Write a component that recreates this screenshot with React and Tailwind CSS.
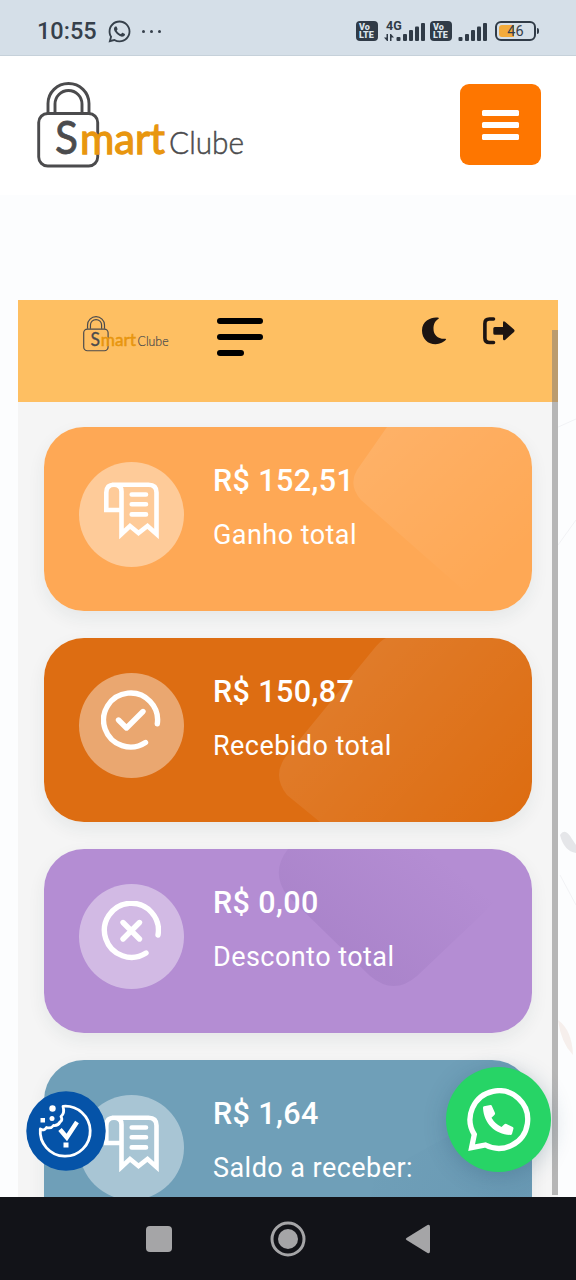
import React from "react";
import { FaWhatsapp } from "react-icons/fa";

const ReceiptIcon = () => (
  <svg className="w-[60px] h-[60px]" viewBox="0 0 60 60" fill="none" stroke="#fff" strokeWidth="4.6" aria-hidden="true">
    <path d="M11 5.700H47.500Q55.500 5.700 55.500 13.500V55L46.500 47L37.500 54L29 47L20.500 55V12.500Q20.500 5.700 13 5.700Q5.300 5.700 5.300 13.500V31H20.500" />
    <path strokeLinecap="round" d="M30.700 15.500H45M30.700 25.200H45M30.700 35.400H45" />
  </svg>
);

const CheckIcon = () => (
  <svg className="w-[60px] h-[60px]" viewBox="0 0 60 60" fill="none" stroke="#fff" strokeWidth="5.400" strokeLinecap="round" aria-hidden="true">
    <path d="M56.300 33.800A27 27 0 1 0 44.500 52.500" />
    <path strokeLinejoin="round" d="M17.500 30L25.500 38L42 21.500" />
  </svg>
);

const CrossIcon = () => (
  <svg className="w-[60px] h-[60px]" viewBox="0 0 60 60" fill="none" stroke="#fff" strokeWidth="5.400" strokeLinecap="round" aria-hidden="true">
    <path d="M57 34A27 27 0 1 0 45 52" />
    <path d="M22 21.500L38.500 38M38.500 21.500L22 38" />
  </svg>
);

const MoonIcon = ({ className }) => (
  <svg className={className} viewBox="0 0 25 28" fill="currentColor" aria-hidden="true">
    <path d="M16.500 0.800C11 -0.500 0 3 0 13.500C0 22 6 27.300 13.500 27.300C18 27.300 22 25 24 22.600Q24.500 21.700 23.300 21.800C16 22.300 11.500 18 11.500 12C11.500 7 12.800 4 16.500 1.700Q17.300 1 16.500 0.800Z" />
  </svg>
);

const LogoutIcon = ({ className }) => (
  <svg className={className} viewBox="0 0 32 28" fill="none" aria-hidden="true">
    <path d="M10.500 2H6.500Q1.900 2 1.900 6.500V21Q1.900 25.500 6.500 25.500H10.500" stroke="currentColor" strokeWidth="3.600" strokeLinecap="round" />
    <path d="M10.300 11.500Q10.300 10 11.800 10H20V5.500Q20.300 3.500 22 4.700L31 12.500Q32.200 13.800 31 15L22 23Q20.300 24 20 22V17.800H11.800Q10.300 17.800 10.300 16.300Z" fill="currentColor" />
  </svg>
);

const cards = [
  {
    value: "R$ 152,51",
    label: "Ganho total",
    color: "bg-[#fea855]",
    icon: <ReceiptIcon />,
    shape: "M343 0L313 43Q304 58 317 73L425 168Q440 184 460 184H488V0Z",
    tone: "#fff",
    line: [310, 20, 440, 160],
  },
  {
    value: "R$ 150,87",
    label: "Recebido total",
    color: "bg-[#dd6d12]",
    icon: <CheckIcon />,
    shape: "M342 0Q337 2 329 12L243 117Q227 137 243 157L276 184H488V0Z",
    tone: "#fff",
    line: [280, 30, 460, 190],
  },
  {
    value: "R$ 0,00",
    label: "Desconto total",
    color: "bg-[#b48dd3]",
    icon: <CrossIcon />,
    shape: "M244 0Q226 23 243 46L326 127Q350 147 373 127L488 18V0Z",
    tone: "#60408a",
    line: [320, 110, 400, 10],
  },
  {
    value: "R$ 1,64",
    label: "Saldo a receber:",
    color: "bg-[#6f9fb8]",
    icon: <ReceiptIcon />,
    shape: "M320 184L330 117L408 74Q450 50 488 85V184Z",
    tone: "#3c6a90",
    line: [470, 150, 340, 80],
  },
];

const Logo = ({ className }) => (
  <svg className={`overflow-visible ${className}`} viewBox="0 0 208 87">
    <g fill="none" stroke="#4b4b4d" strokeWidth="2.900">
      <path d="M11 31V21.500A20.500 20 0 0 1 52 21.500V31" />
      <path d="M18 31V22A13.500 13.500 0 0 1 45 22V31" />
      <rect x="1.700" y="31.500" width="59" height="52.500" rx="9" />
    </g>
    <text x="18" y="72" fill="#4b4b4d" stroke="#4b4b4d" strokeWidth="0.800" fontFamily="Lato, sans-serif" fontSize="47" textLength="23" lengthAdjust="spacingAndGlyphs">S</text>
    <text x="43" y="72" fill="#e8960f" stroke="#e8960f" strokeWidth="1.300" fontFamily="Lato, sans-serif" fontSize="43" textLength="85" lengthAdjust="spacingAndGlyphs">mart</text>
    <text x="132" y="71.500" fill="#4b4b4d" stroke="#4b4b4d" strokeWidth="0.500" fontFamily="Lato, sans-serif" fontSize="32" fontWeight="300" textLength="75" lengthAdjust="spacingAndGlyphs">Clube</text>
  </svg>
);

const Volte = () => (
  <div className="w-[22px] h-[20px] rounded-[4px] bg-[#303b47] text-[#dce5ec] text-[9px] leading-[8px] font-black pt-[2px] pl-[3px]">
    <div>Vo</div>
    <div>LTE</div>
  </div>
);

const Signal = ({ data }) => (
  <svg className={data ? "w-[41px] h-[22px] overflow-visible" : "w-[30px] h-[22px]"} viewBox={data ? "0 0 41 22" : "11 0 30 22"} fill="#303b47" aria-hidden="true">
    {data && (
      <>
        <text x="2" y="9.500" fontFamily="Roboto, sans-serif" fontSize="12.500" fontWeight="700">4G</text>
        <path d="M4 14V21H3L0 17.500H2.500V14ZM6 21V14H7L10 17.500H7.500V21Z" />
      </>
    )}
    <rect x="12.500" y="17" width="4" height="4" rx="1" />
    <rect x="19" y="14" width="4" height="7" rx="1" />
    <rect x="25" y="10" width="4" height="11" rx="1" />
    <rect x="31" y="6.500" width="4" height="14.500" rx="1" />
    <rect x="37" y="3" width="4" height="18" rx="1" />
  </svg>
);

const StatusBar = () => (
  <div className="h-[56px] shrink-0 bg-[#d5dfe8] border-b border-[#c6d1da] flex items-center justify-between pl-[37px] pr-[37px] pt-[7px] text-[#36404b]">
    <div className="flex items-center">
      <span className="w-[72px] mt-[2px] text-[23.500px] font-medium">10:55</span>
      <FaWhatsapp className="w-[25px] h-[25px] -ml-[2px]" />
      <span className="flex gap-[5px] ml-[10px]">
        <i className="size-[3px] rounded-full bg-current" />
        <i className="size-[3px] rounded-full bg-current" />
        <i className="size-[3px] rounded-full bg-current" />
      </span>
    </div>
    <div className="flex items-center">
      <Volte />
      <div className="ml-[6px] mr-[5px]"><Signal data /></div>
      <Volte />
      <div className="ml-[5px] mr-[8px]"><Signal /></div>
      <div className="relative w-[41px] h-[20px] rounded-[6px] border-2 border-[#303b47] p-[2px]">
        <div className="w-[15px] h-full rounded-l-[3px] bg-[#f3ab3b]" />
        <span className="absolute inset-0 text-center text-[14.500px] leading-[17px]">46</span>
      </div>
      <div className="w-[2px] h-[6px] ml-[1px] bg-[#303b47] rounded-r" />
    </div>
  </div>
);

const Card = ({ card, index }) => (
  <div className={`relative h-[184px] shrink-0 rounded-[40px] overflow-hidden ${card.color}`}>
    <svg className="absolute inset-0 w-full h-full" viewBox="0 0 488 184" aria-hidden="true">
      <defs>
        <linearGradient id={`shine${index}`} gradientUnits="userSpaceOnUse" x1={card.line[0]} y1={card.line[1]} x2={card.line[2]} y2={card.line[3]}>
          <stop offset="0" stopColor={card.tone} stopOpacity="0.110" />
          <stop offset="1" stopColor={card.tone} stopOpacity="0" />
        </linearGradient>
      </defs>
      <path d={card.shape} fill={`url(#shine${index})`} />
    </svg>
    <div className="relative flex pl-[35px] pt-[35px] text-white">
      <div className="w-[105px] h-[105px] rounded-full bg-white/40 pl-[22px] pt-[17px]">{card.icon}</div>
      <div className="ml-[29px]">
        <div className="text-[30.500px] leading-[38px] font-medium tracking-[0.4px]">{card.value}</div>
        <div className="mt-[18px] text-[27px] leading-[34px] tracking-[0.45px]">{card.label}</div>
      </div>
    </div>
  </div>
);

const CookieButton = () => (
  <button className="absolute left-[8px] top-[791px] w-[80px] h-[80px]" aria-label="Cookies">
    <svg viewBox="0 0 80 80" fill="none">
      <circle cx="40" cy="40" r="39.700" fill="#0553a8" />
      <path d="M37 15.300A25 25 0 1 1 14.300 38Q18 40.500 20.500 36.500Q25 38 27.500 34.500Q32 35 34 31Q37 29 35 25.500Q39 22 37 15.300Z" stroke="#fff" strokeWidth="2.800" strokeLinejoin="round" />
      <circle cx="26.500" cy="17.500" r="3.200" fill="#fff" />
      <rect x="14.500" y="27" width="4.500" height="4.500" fill="#fff" />
      <circle cx="26" cy="27.500" r="2.500" fill="#fff" />
      <path d="M34 38.500L40.800 46.500L51 31" stroke="#fff" strokeWidth="4.500" />
      <rect x="37.500" y="51.500" width="5" height="5" fill="#fff" />
    </svg>
  </button>
);

const WhatsAppButton = () => (
  <button className="absolute left-[428px] top-[767px] w-[105px] h-[105px] rounded-full bg-[#27d466] flex items-center justify-center shadow-[0_4px_22px_rgba(30,70,100,0.25)]" aria-label="WhatsApp">
    <svg className="w-[64px] h-[64px]" viewBox="0 0 64 64" fill="none">
      <path d="M4.600 59.600L7.300 46.500A28.800 28.800 0 1 1 18.500 57Z" stroke="#fff" strokeWidth="5.300" />
      <path d="M17 18.200L23.500 17.100Q24.600 17 25 18.200L28 25Q28.300 26.100 27.400 27L24.500 29.800Q28 36 34.500 39L37.400 36.200Q38.300 35.500 39.500 36L45.700 39Q46.700 39.600 46.400 40.700L45 46Q44.500 47.100 43.200 47C28 46 17 36 16 20Q15.900 18.500 17 18.200Z" fill="#fff" />
    </svg>
  </button>
);

export default function App() {
  return (
    <div className="w-[576px] h-[1280px] overflow-hidden flex flex-col bg-[#fcfdfe] font-[Roboto,sans-serif]">
      <StatusBar />

      <header className="h-[139px] shrink-0 bg-white flex justify-between pl-[37px] pr-[35px]">
        <Logo className="w-[208px] h-[87px] mt-[26px]" />
        <button className="w-[81px] h-[81px] mt-[28px] rounded-[9px] bg-[#fe7600] flex flex-col items-center justify-center gap-[6px]" aria-label="Menu">
          <span className="w-[37px] h-[6px] rounded-[1.500px] bg-white" />
          <span className="w-[37px] h-[6px] rounded-[1.500px] bg-white" />
          <span className="w-[37px] h-[6px] rounded-[1.500px] bg-white" />
        </button>
      </header>

      <div className="relative flex-1 min-h-0 pt-[105px] px-[18px]">
        {/* faint line art at the right edge of the page */}
        <svg className="absolute right-0 top-0 w-[20px] h-[1002px]" viewBox="0 0 20 1002" fill="none" aria-hidden="true">
          <path d="M0 233L20 224M2 350L20 325M4 680L20 710" stroke="#f1f2f5" />
          <path d="M4 640Q9 632 16 644L20 650V658Q8 656 4 640Z" fill="#e5e6e9" />
          <path d="M2 825Q16 835 17 860Q5 848 2 825Z" fill="#f6efec" />
        </svg>

        <div className="relative w-[540px] h-full">
          <div className="h-full overflow-hidden bg-[#f5f5f5] flex flex-col">
            <div className="h-[102px] shrink-0 bg-[#febf62] flex items-start pl-[65px] text-[#1c1412]">
              <Logo className="w-[86px] h-[36px] mt-[16px]" />
              <div className="ml-[48px] mt-[18px] w-[46px] flex flex-col gap-[10px]">
                <span className="h-[6px] rounded-full bg-black" />
                <span className="h-[6px] rounded-full bg-black" />
                <span className="h-[6px] w-[27px] rounded-full bg-black" />
              </div>
              <MoonIcon className="ml-[159px] mt-[17px] w-[25px] h-[28px]" />
              <LogoutIcon className="ml-[36px] mt-[17px] w-[32px] h-[28px]" />
            </div>
            <div className="flex flex-col gap-[27px] pt-[25px] px-[26px]">
              {cards.map((card, i) => (
                <div key={i} className="rounded-[40px] shadow-[0_7px_18px_rgba(30,50,60,0.07)]">
                  <Card card={card} index={i} />
                </div>
              ))}
            </div>
          </div>
          <div className="absolute right-0 top-[30px] bottom-[2px] w-[6px] bg-[#777]/50" />
          <CookieButton />
          <WhatsAppButton />
        </div>
      </div>

      <nav className="h-[83px] shrink-0 bg-[#121318] flex justify-center items-center gap-[98.500px]">
        <svg className="w-[26px] h-[26px]" viewBox="0 0 26 26"><rect width="26" height="26" rx="4" fill="#a5a5a7" /></svg>
        <svg className="w-[36px] h-[36px]" viewBox="0 0 36 36" fill="none">
          <circle cx="18" cy="18" r="16" stroke="#a5a5a7" strokeWidth="3" />
          <circle cx="18" cy="18" r="10" fill="#a5a5a7" />
        </svg>
        <svg className="w-[26px] h-[30px]" viewBox="0 0 26 30"><path d="M1.500 14L22.500 1Q25 0 25 3V27Q25 30 22.500 29L1.500 16Q0 15 1.500 14Z" fill="#a5a5a7" /></svg>
      </nav>
    </div>
  );
}
